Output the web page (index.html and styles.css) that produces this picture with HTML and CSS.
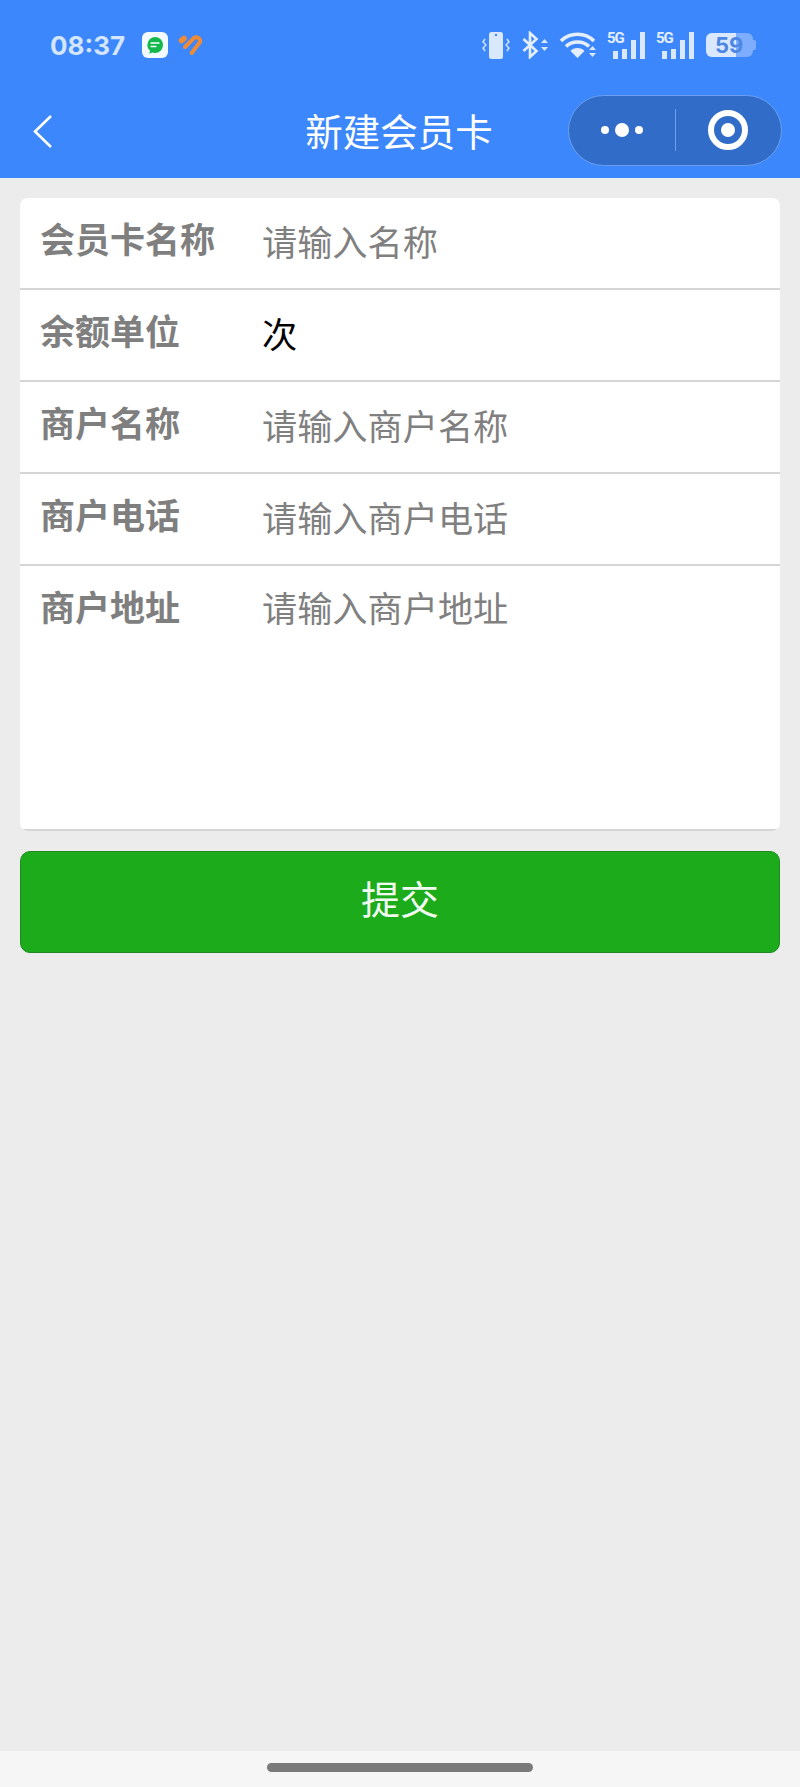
FILE: index.html
```html
<!DOCTYPE html>
<html>
    <head>
        <title> 新建会员卡 </title>
        <link rel="stylesheet" href="styles.css">
    </head>
    <body>
        <div class="header">
            <div class="status-bar">
                <span class="time">08:37</span>
                <svg class="app-icon" width="26" height="26" viewBox="0 0 26 26">
                    <rect width="26" height="26" rx="6" fill="#f4fbff"/>
                    <path d="M13 5a8 8 0 0 1 0 16c-1 0-1.800-.1-2.600-.4l-3 1.200.6-3a8 8 0 0 1 5-13.800z" fill="#12b84c"/>
                    <path d="M9 11h8M9 14.500h5" stroke="#fff" stroke-width="1.300" stroke-linecap="round"/>
                </svg>
                <svg class="app-icon" width="27" height="24" viewBox="0 0 27 24">
                    <path d="M4.500 7.500L7 5.500" fill="none" stroke="#ef8a35" stroke-width="5.500" stroke-linecap="round"/>
                    <path d="M8 14L17 5c3-2 7 1 6 4L14.700 20" fill="none" stroke="#ef8a35" stroke-width="4" stroke-linecap="round" stroke-linejoin="round"/>
                </svg>
                <div class="status-right">
                    <svg width="28" height="28" viewBox="0 0 28 28">
                        <rect x="7" y="1" width="14" height="27" rx="2.500" fill="#d9e8ff"/>
                        <rect x="13" y="3" width="2" height="2" fill="#3c87fc"/>
                        <path d="M3 8l-2 3 3 3-3 3 2 3M25 8l2 3-3 3 3 3-2 3" fill="none" stroke="#d9e8ff" stroke-width="1.400"/>
                    </svg>
                    <svg class="bluetooth" width="27" height="28" viewBox="0 0 27 28">
                        <path d="M1.500 8l13 12-6.500 6V2l6.500 6-13 12" fill="none" stroke="#e4eeff" stroke-width="2.600"/>
                        <path d="M19 12l3.500-4 3.500 4zM19 16l3.500 4 3.500-4z" fill="#d9e8ff"/>
                    </svg>
                    <svg width="38" height="28" viewBox="0 0 38 28">
                        <path d="M2 10c9-9 24-9 33 0M7 15.500c6-6 17-6 23 0" fill="none" stroke="#e4eeff" stroke-width="3.600"/>
                        <path d="M18.500 16c-3 0-5.500 1-7 3l7 7 7-7c-1.500-2-4-3-7-3z" fill="#e4eeff" transform="translate(0 1)"/>
                        <path d="M30 19l3.500-4 3.500 4zM30 22l3.500 4 3.500-4z" fill="#d9e8ff"/>
                    </svg>
                    <div class="signal">
                        <span class="signal-label">5G</span>
                        <i class="bar bar-1"></i><i class="bar bar-2"></i><i class="bar bar-3"></i><i class="bar bar-4"></i>
                    </div>
                    <div class="signal">
                        <span class="signal-label">5G</span>
                        <i class="bar bar-1"></i><i class="bar bar-2"></i><i class="bar bar-3"></i><i class="bar bar-4"></i>
                    </div>
                    <div class="battery">
                        <span class="battery-fill"></span>
                        <span class="battery-num">59</span>
                    </div>
                </div>
            </div>
            <div class="nav-bar">
                <svg class="back" width="22" height="36" viewBox="0 0 22 36">
                    <path d="M19 2L3 17.500 19 33" fill="none" stroke="#fff" stroke-width="2.600"/>
                </svg>
                <div class="title">新建会员卡</div>
                <div class="capsule">
                    <div class="capsule-side">
                        <span class="dot"></span><span class="dot dot-big"></span><span class="dot"></span>
                    </div>
                    <div class="capsule-line"></div>
                    <div class="capsule-side">
                        <span class="target"><span class="target-in"></span></span>
                    </div>
                </div>
            </div>
        </div>

        <div class="card">
            <div class="row">
                <div class="label">会员卡名称</div>
                <div class="value placeholder">请输入名称</div>
            </div>
            <div class="row">
                <div class="label">余额单位</div>
                <div class="value">次</div>
            </div>
            <div class="row">
                <div class="label">商户名称</div>
                <div class="value placeholder">请输入商户名称</div>
            </div>
            <div class="row">
                <div class="label">商户电话</div>
                <div class="value placeholder">请输入商户电话</div>
            </div>
            <div class="row row-big">
                <div class="label">商户地址</div>
                <div class="value placeholder">请输入商户地址</div>
            </div>
        </div>

        <button class="submit">提交</button>

        <div class="home-area">
            <div class="home-bar"></div>
        </div>
    </body>
</html>
```

FILE: styles.css
```css
body {
    display: flex;
    flex-direction: column;
    height: 1787px;
    margin: 0;
    font-family: "Noto Sans CJK SC", "Liberation Sans", sans-serif;
    background-color: #ececec;
    overflow: hidden;
}

.header {
    height: 178px;
    background-color: #3c87fc;
    flex-shrink: 0;
}
.status-bar {
    display: flex;
    align-items: center;
    height: 90px;
    padding: 0 45px 0 50px;
}
.time {
    width: 92px;
    font-family: Inter, "Liberation Sans", sans-serif;
    font-size: 26px;
    font-weight: 700;
    color: #d3e5ff;
}
.app-icon {
    margin-right: 9px;
}
.status-right {
    display: flex;
    align-items: center;
    gap: 10px;
    margin-left: auto;
}
.bluetooth {
    margin-left: 2px;
}
.signal {
    position: relative;
    display: flex;
    align-items: flex-end;
    gap: 4px;
    width: 39px;
    height: 28px;
    padding-left: 6px;
    box-sizing: border-box;
}
.signal-label {
    position: absolute;
    left: 0;
    top: 0;
    font-family: Roboto, "Liberation Sans", sans-serif;
    font-size: 15px;
    line-height: 15px;
    font-weight: bold;
    letter-spacing: -1px;
    color: #e4eeff;
}
.bar {
    width: 5px;
    background-color: #d9e8ff;
}
.bar-1 { height: 8px; }
.bar-2 { height: 10px; }
.bar-3 { height: 19px; }
.bar-4 { height: 27px; }
.battery {
    position: relative;
    width: 47px;
    height: 24px;
    margin-left: 1px;
    margin-right: 2px;
    border-radius: 6px;
    background-color: #7eadfd;
}
.battery::after {
    content: "";
    position: absolute;
    right: -3px;
    top: 7px;
    width: 3px;
    height: 10px;
    border-radius: 0 2px 2px 0;
    background-color: #7eadfd;
}
.battery-fill {
    position: absolute;
    left: 0;
    top: 0;
    bottom: 0;
    width: 30px;
    border-radius: 6px 0 0 6px;
    background-color: #d9e8ff;
}
.battery-num {
    position: absolute;
    left: 9px;
    top: 0;
    font-family: Inter, "Liberation Sans", sans-serif;
    font-size: 22px;
    line-height: 24px;
    font-weight: 700;
    color: #4d87e3;
}

.nav-bar {
    position: relative;
    display: flex;
    align-items: center;
    justify-content: flex-end;
    height: 88px;
    padding-right: 18px;
}
.back {
    position: absolute;
    left: 32px;
    top: 24px;
}
.title {
    position: absolute;
    left: 0;
    right: 2px;
    top: 15px;
    text-align: center;
    font-size: 37.5px;
    line-height: 50px;
    color: #fff;
}
.capsule {
    display: flex;
    align-items: center;
    width: 214px;
    height: 71px;
    margin-top: -8px;
    box-sizing: border-box;
    border: 1px solid #6b9fee;
    border-radius: 36px;
    background-color: #316dc8;
}
.capsule-side {
    display: flex;
    align-items: center;
    justify-content: center;
    gap: 6px;
    flex: 1;
}
.capsule-line {
    width: 1px;
    height: 42px;
    background-color: #6b9fee;
}
.dot {
    width: 8px;
    height: 8px;
    border-radius: 50%;
    background-color: #fff;
}
.dot-big {
    width: 14px;
    height: 14px;
}
.target {
    display: flex;
    align-items: center;
    justify-content: center;
    width: 40px;
    height: 40px;
    box-sizing: border-box;
    border: 6px solid #fff;
    border-radius: 50%;
}
.target-in {
    width: 14px;
    height: 14px;
    border-radius: 50%;
    background-color: #fff;
}

.card {
    margin: 20px 20px 0;
    background-color: #fff;
    border-radius: 8px;
    overflow: hidden;
}
.row {
    display: flex;
    height: 90px;
    border-bottom: 2px solid #d5d5d5;
}
.row-big {
    height: 263px;
}
.label {
    width: 222px;
    padding-left: 20px;
    font-size: 35px;
    line-height: 50px;
    padding-top: 15px;
    font-weight: bold;
    color: #7f7f7f;
}
.value {
    font-size: 35.2px;
    line-height: 50px;
    padding-top: 18px;
    color: #000;
}
.placeholder {
    color: #808080;
}
.row-big .value {
    padding-top: 16px;
}

.submit {
    display: block;
    width: 760px;
    height: 102px;
    margin: 20px 20px 0;
    padding: 0 0 10px;
    font-family: inherit;
    font-size: 39px;
    color: #f2fbf2;
    background-color: #1bab1b;
    border: 1px solid #1f8a24;
    border-radius: 10px;
}

.home-area {
    display: flex;
    justify-content: center;
    align-items: center;
    height: 36px;
    margin-top: auto;
    background-color: #f6f6f6;
}
.home-bar {
    width: 266px;
    height: 9px;
    margin-top: -4px;
    border-radius: 5px;
    background-color: #7a7a7a;
}
```
